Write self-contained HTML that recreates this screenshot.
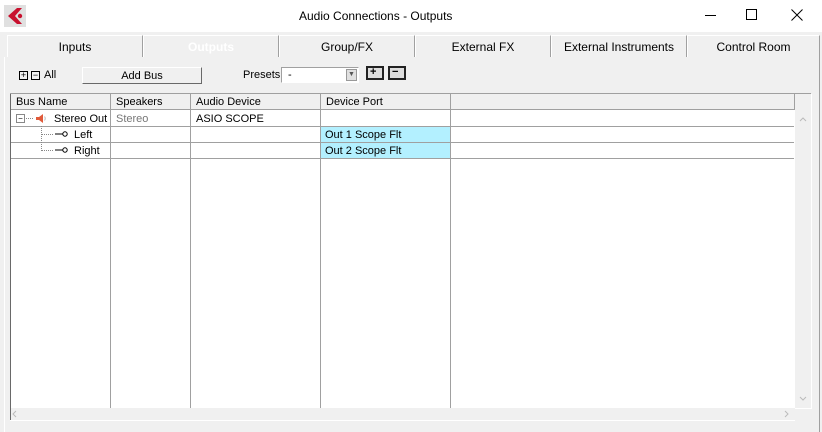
<!DOCTYPE html>
<html><head><style>
*{box-sizing:border-box;margin:0;padding:0}
body{width:822px;height:432px;overflow:hidden;background:#f0f0f0;font-family:"Liberation Sans",sans-serif;font-size:11px;color:#000;position:relative}
.a{position:absolute}
.title{left:0;top:0;width:822px;height:32px;background:#fff}
.tab{top:35px;height:22px;background:#f0f0f0;border-top:1px solid #fff;border-left:1px solid #fff;border-right:1px solid #a0a0a0;text-align:center;line-height:23px;font-size:12px}
.hdr{top:94px;height:16px;background:#f0f0f0;border-bottom:1px solid #a0a0a0;line-height:17px;padding-left:5px}
.t{line-height:18px}
.vl{width:1px;background:#a0a0a0}
.hl{height:1px;background:#a0a0a0}
</style></head><body>
<div class="a title"></div>
<svg class="a" style="left:4px;top:5px" width="22" height="22" viewBox="0 0 22 22"><rect width="22" height="22" fill="#e0e0e0"/><path d="M13 3 L4 11 L13 19 L18 19 L11 11 L18 3Z" fill="#c8102e"/><circle cx="16" cy="11" r="2.2" fill="#c8102e"/></svg>
<div class="a" style="left:299px;top:9px;font-size:12px">Audio Connections - Outputs</div>
<div class="a" style="left:705px;top:15px;width:11px;height:1px;background:#000"></div>
<div class="a" style="left:746px;top:9px;width:11px;height:11px;border:1px solid #000"></div>
<svg class="a" style="left:791px;top:9px" width="12" height="12"><path d="M0.5 0.5L11.5 11.5M11.5 0.5L0.5 11.5" stroke="#000" stroke-width="1"/></svg>
<div class="a tab" style="left:7px;width:136px">Inputs</div>
<div class="a tab" style="left:143px;width:136px;color:#fff;font-weight:bold">Outputs</div>
<div class="a tab" style="left:279px;width:136px">Group/FX</div>
<div class="a tab" style="left:415px;width:136px">External FX</div>
<div class="a tab" style="left:551px;width:136px">External Instruments</div>
<div class="a tab" style="left:687px;width:133px">Control Room</div>
<div class="a" style="left:4px;top:57px;width:1px;height:375px;background:#fff"></div>
<div class="a" style="left:819px;top:57px;width:1px;height:375px;background:#a0a0a0"></div>
<div class="a" style="left:19px;top:71px;width:9px;height:9px;border:1px solid #000;font-size:9px;line-height:7px;text-align:center">+</div>
<div class="a" style="left:31px;top:71px;width:9px;height:9px;border:1px solid #000;font-size:9px;line-height:7px;text-align:center">−</div>
<div class="a" style="left:44px;top:69px;font-size:11px">All</div>
<div class="a" style="left:82px;top:67px;width:120px;height:17px;border:1px solid #fff;border-right-color:#696969;border-bottom-color:#696969;text-align:center;line-height:16px;font-size:11px;background:#f0f0f0">Add Bus</div>
<div class="a" style="left:243px;top:69px">Presets</div>
<div class="a" style="left:281px;top:67px;width:78px;height:16px;background:#fff;border:1px solid #fff;border-top-color:#a0a0a0;border-left-color:#a0a0a0;padding-left:6px;line-height:15px">-</div>
<div class="a" style="left:346px;top:69px;width:11px;height:12px;background:#e0e0e0;border:1px solid #999;font-size:7px;text-align:center;line-height:10px;color:#555">▼</div>
<div class="a" style="left:366px;top:66px;width:18px;height:14px;border:2px solid #222;background:#ddd;font-size:11px;line-height:9px;font-weight:bold;padding-left:2px">+</div>
<div class="a" style="left:388px;top:66px;width:18px;height:14px;border:2px solid #222;background:#ddd;font-size:11px;line-height:9px;font-weight:bold;padding-left:2px">−</div>
<div class="a" style="left:10px;top:94px;width:785px;height:314px;background:#fff"></div>
<div class="a" style="left:10px;top:94px;width:1px;height:326px;background:#696969"></div>
<div class="a" style="left:10px;top:93px;width:801px;height:1px;background:#a0a0a0"></div>
<div class="a hdr" style="left:11px;width:99px">Bus Name</div>
<div class="a hdr" style="left:111px;width:79px">Speakers</div>
<div class="a hdr" style="left:191px;width:129px">Audio Device</div>
<div class="a hdr" style="left:321px;width:129px">Device Port</div>
<div class="a hdr" style="left:451px;width:343px"></div>
<div class="a vl" style="left:110px;top:94px;height:314px"></div>
<div class="a vl" style="left:190px;top:94px;height:314px"></div>
<div class="a vl" style="left:320px;top:94px;height:314px"></div>
<div class="a vl" style="left:450px;top:94px;height:314px"></div>
<div class="a vl" style="left:794px;top:94px;height:16px"></div>
<div class="a hl" style="left:11px;top:126px;width:783px"></div>
<div class="a hl" style="left:11px;top:142px;width:783px"></div>
<div class="a hl" style="left:11px;top:158px;width:783px"></div>
<div class="a" style="left:321px;top:127px;width:129px;height:15px;background:#b3f0ff"></div>
<div class="a" style="left:321px;top:143px;width:129px;height:15px;background:#b3f0ff"></div>
<div class="a" style="left:16px;top:114px;width:9px;height:9px;border:1px solid #888;font-size:8px;line-height:7px;text-align:center">−</div>
<div class="a" style="left:26px;top:118px;width:7px;border-top:1px dotted #888"></div>
<svg class="a" style="left:35px;top:113px" width="12" height="11"><path d="M1 4h3l4-3v9l-4-3H1z" fill="#e05a3a"/><path d="M9.5 3.5q1.5 2 0 4" stroke="#bbb" fill="none"/></svg>
<div class="a t" style="left:54px;top:110px">Stereo Out</div>
<div class="a t" style="left:116px;top:110px;color:#777">Stereo</div>
<div class="a t" style="left:196px;top:110px">ASIO SCOPE</div>
<div class="a" style="left:41px;top:126px;height:25px;border-left:1px dotted #888"></div>
<div class="a" style="left:41px;top:134px;width:12px;border-top:1px dotted #888"></div>
<div class="a" style="left:41px;top:150px;width:12px;border-top:1px dotted #888"></div>
<svg class="a" style="left:55px;top:130px" width="14" height="8"><path d="M0 4h8" stroke="#000"/><circle cx="10" cy="4" r="2.2" fill="none" stroke="#000"/></svg>
<svg class="a" style="left:55px;top:146px" width="14" height="8"><path d="M0 4h8" stroke="#000"/><circle cx="10" cy="4" r="2.2" fill="none" stroke="#000"/></svg>
<div class="a t" style="left:74px;top:126px">Left</div>
<div class="a t" style="left:74px;top:142px">Right</div>
<div class="a t" style="left:325px;top:126px">Out 1 Scope Flt</div>
<div class="a t" style="left:325px;top:142px">Out 2 Scope Flt</div>
<div class="a" style="left:795px;top:94px;width:16px;height:314px;background:#f0f0f0"></div>
<div class="a" style="left:811px;top:94px;width:1px;height:315px;background:#fff"></div>
<svg class="a" style="left:799px;top:116px" width="8" height="6"><path d="M1 5l3-3 3 3" stroke="#bbb" fill="none"/></svg>
<svg class="a" style="left:799px;top:396px" width="8" height="6"><path d="M1 1l3 3 3-3" stroke="#bbb" fill="none"/></svg>
<div class="a" style="left:11px;top:408px;width:784px;height:12px;background:#f0f0f0"></div>
<div class="a" style="left:10px;top:420px;width:785px;height:1px;background:#fff"></div>
<div class="a" style="left:795px;top:408px;width:17px;height:1px;background:#fff"></div>
<svg class="a" style="left:11px;top:410px" width="6" height="8"><path d="M5 1L2 4l3 3" stroke="#bbb" fill="none"/></svg>
<svg class="a" style="left:497px;top:410px;left:497px" width="0" height="0"></svg>
<svg class="a" style="left:784px;top:410px" width="6" height="8"><path d="M1 1l3 3-3 3" stroke="#bbb" fill="none"/></svg>
</body></html>
